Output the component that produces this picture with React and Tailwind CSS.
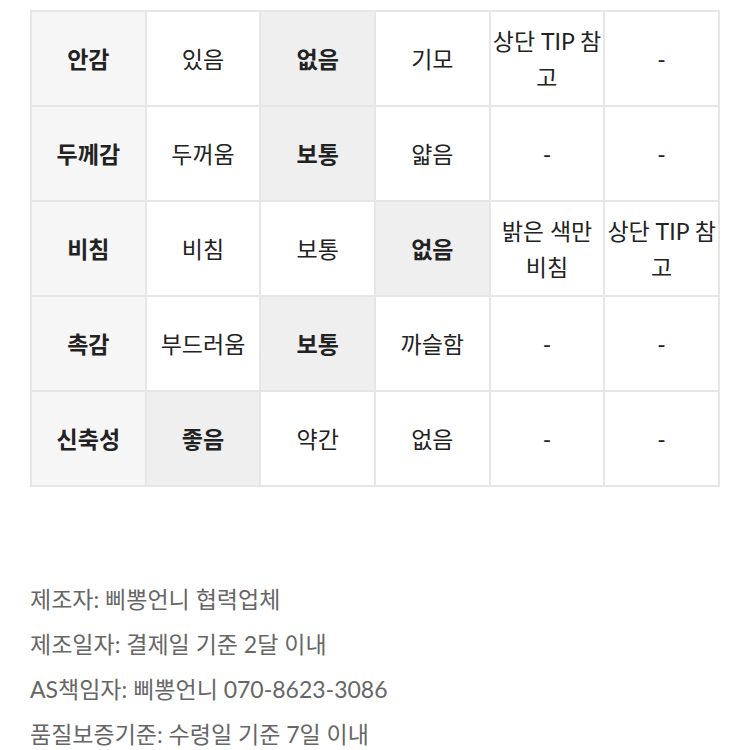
const rows = [
  ["안감", "있음", "없음", "기모", "상단 TIP 참\n고", "-", 2],
  ["두께감", "두꺼움", "보통", "얇음", "-", "-", 2],
  ["비침", "비침", "보통", "없음", "밝은 색만\n비침", "상단 TIP 참\n고", 3],
  ["촉감", "부드러움", "보통", "까슬함", "-", "-", 2],
  ["신축성", "좋음", "약간", "없음", "-", "-", 1],
];

export default function App() {
  return (
    <div
      className="bg-white w-[750px] h-[750px] overflow-hidden pl-[30px] pt-[10px]"
      style={{ fontFamily: 'Lato, "Noto Sans CJK KR", sans-serif' }}
    >
      <table className="w-[690px] border-collapse table-fixed border-2 border-[#e6e6e6]">
        <tbody>
          {rows.map((r, i) => (
            <tr key={i} className="h-[95px]">
              {r.slice(0, 6).map((c, j) => {
                const head = j === 0;
                const hl = j === r[6];
                return (
                  <td
                    key={j}
                    className={
                      "border-2 border-[#e6e6e6] text-center align-middle px-[1px] text-[23px] leading-[36px] text-[#222] whitespace-pre-line " +
                      (head ? "bg-[#f6f6f6] font-bold" : hl ? "bg-[#efefef] font-bold" : "bg-white")
                    }
                  >
                    {c}
                  </td>
                );
              })}
            </tr>
          ))}
        </tbody>
      </table>
      <div className="mt-[90px] text-[23px] leading-[45px] text-[#666]">
        <p>제조자: 삐뽕언니 협력업체</p>
        <p>제조일자: 결제일 기준 2달 이내</p>
        <p>AS책임자: 삐뽕언니 070-8623-3086</p>
        <p>품질보증기준: 수령일 기준 7일 이내</p>
      </div>
    </div>
  );
}
